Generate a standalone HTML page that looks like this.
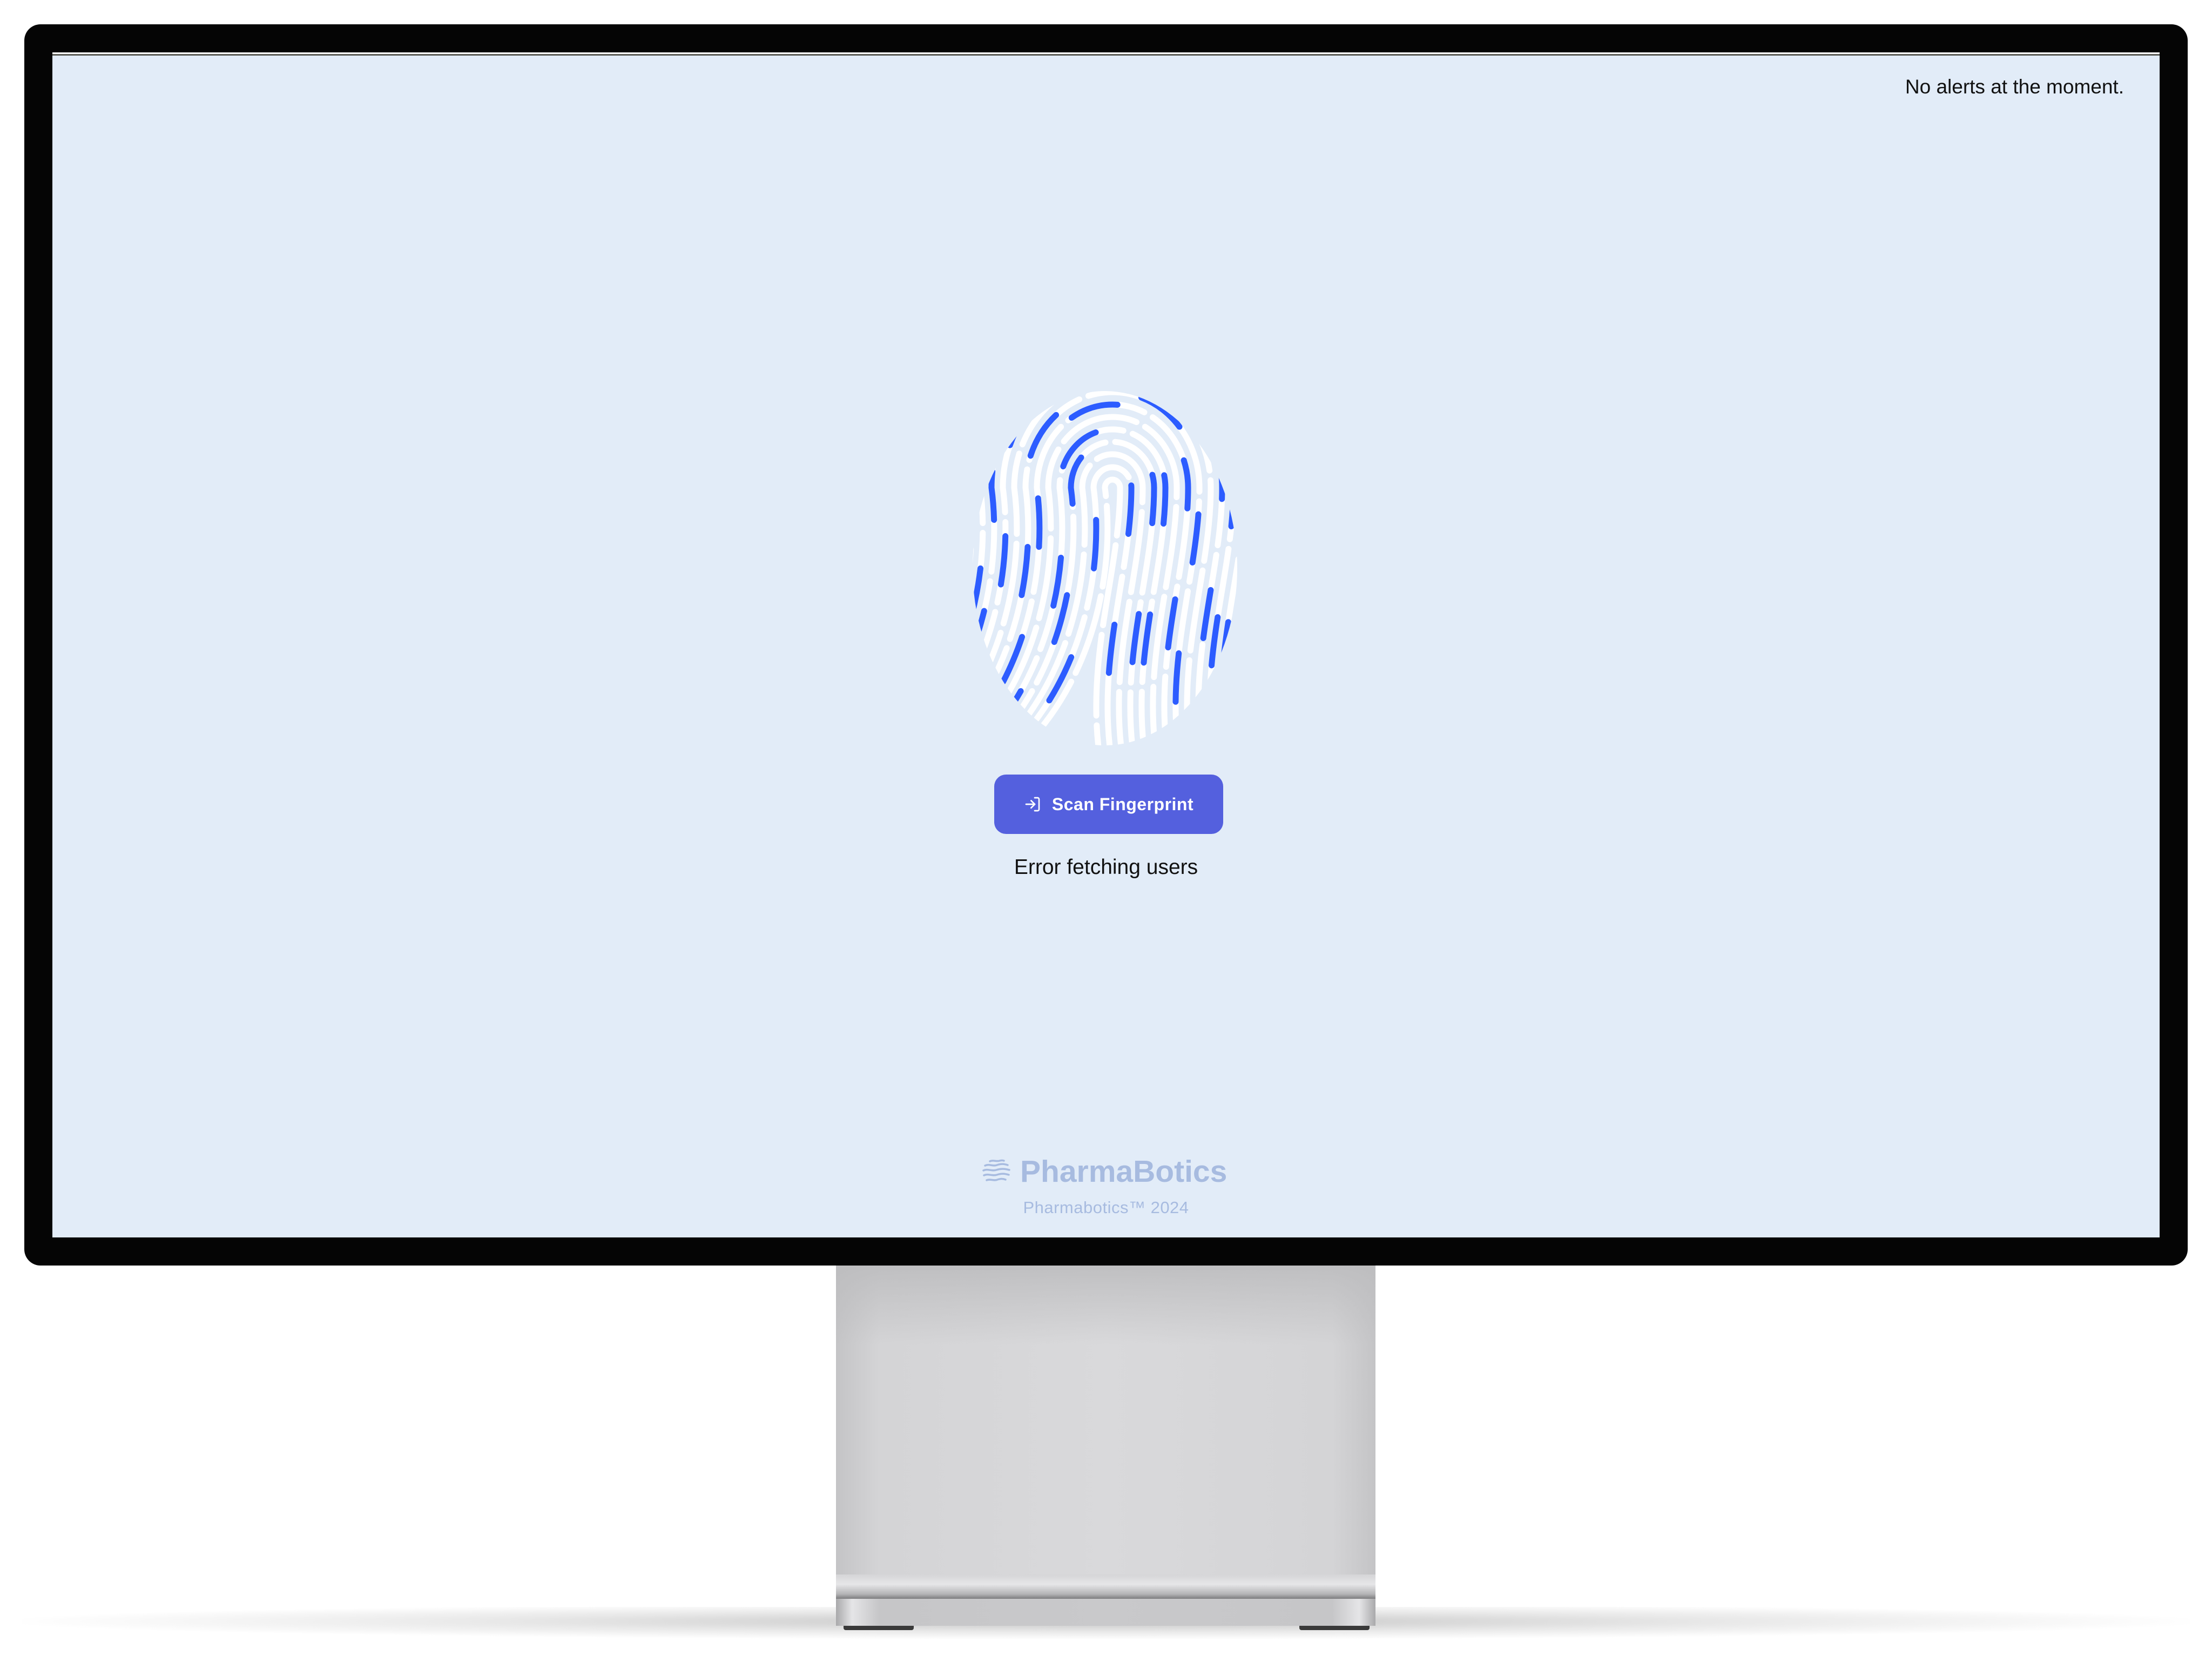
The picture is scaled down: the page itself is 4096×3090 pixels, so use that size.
<!DOCTYPE html>
<html><head><meta charset="utf-8">
<style>
html,body{margin:0;padding:0;background:#fff;}
body{width:4096px;height:3090px;position:relative;overflow:hidden;font-family:"Liberation Sans",sans-serif;}
.shadow{position:absolute;left:40px;top:2975px;width:4016px;height:60px;background:radial-gradient(ellipse at 50% 45%,rgba(150,150,150,.55) 0%,rgba(190,190,190,.35) 40%,rgba(255,255,255,0) 72%);}
.stand{position:absolute;left:1548px;top:2330px;width:999px;height:630px;background:linear-gradient(90deg,#c4c4c6 0%,#d4d4d6 8%,#d9d9db 50%,#d4d4d6 92%,#c4c4c6 100%);}
.stand:before{content:"";position:absolute;left:0;top:0;right:0;height:160px;background:linear-gradient(180deg,#bdbdbf,rgba(217,217,219,0));}
.band{position:absolute;left:1548px;top:2915px;width:999px;height:45px;background:linear-gradient(180deg,#d5d5d7 0%,#e6e6e8 40%,#b5b5b7 80%,#7d7d7f 100%);}
.foot{position:absolute;left:1548px;top:2960px;width:999px;height:50px;background:linear-gradient(90deg,#a9a9ab 0%,#e5e5e7 3%,#c6c6c8 8%,#c9c9cb 50%,#c6c6c8 92%,#e5e5e7 97%,#a9a9ab 100%);}
.feet{position:absolute;top:3010px;height:8px;background:#3a3a3a;border-radius:0 0 4px 4px;}
.bezel{position:absolute;left:45px;top:45px;width:4006px;height:2298px;background:#050505;border-radius:30px;}
.screen{position:absolute;left:97px;top:97px;width:3902px;height:2194px;background:#e2ecf8;border-top:3px solid #fff;box-sizing:border-box;}
.screen:before{content:"";position:absolute;left:0;right:0;top:0;height:3px;background:#5a5b55;}
.alert{position:absolute;right:66px;top:40px;font-size:37px;color:#111;}
.btn{position:absolute;left:1744px;top:1334px;width:424px;height:110px;border-radius:22px;background:#5460de;color:#fff;font-weight:bold;font-size:32px;display:flex;align-items:center;justify-content:center;gap:20px;letter-spacing:.5px;}
.err{position:absolute;left:0;width:100%;top:1484px;text-align:center;font-size:39px;color:#111;}
.logo{position:absolute;left:1722px;top:2036px;display:flex;align-items:center;gap:18px;color:#a7bbe0;font-weight:bold;font-size:57px;}
.copy{position:absolute;left:0;width:100%;top:2118px;text-align:center;color:#a7bbe0;font-size:31px;letter-spacing:.5px;}
</style></head><body>
<div class="shadow"></div>
<div class="stand"></div>
<div class="band"></div>
<div class="foot"></div>
<div class="feet" style="left:1562px;width:130px"></div>
<div class="feet" style="left:2406px;width:130px"></div>
<div class="bezel"></div>
<div class="screen">
<div class="alert">No alerts at the moment.</div>
<svg style="position:absolute;left:0;top:0" width="3902" height="2194" viewBox="97 97 3902 2194">
<defs><clipPath id="fp"><ellipse cx="2046" cy="1049" rx="245" ry="328"/></clipPath></defs>
<g clip-path="url(#fp)" fill="none" stroke-width="11" stroke-linecap="round">
<g stroke="#ffffff" stroke-dasharray="150 18">
<path d="M1896 1380 C2026 1250 2066 1050 2046 900 A14 15 0 0 1 2074 900 C2074 1050 2014 1200 2034 1380" stroke-dashoffset="0"/>
<path d="M1875 1380 C2005 1250 2045 1050 2025 900 A35 38 0 0 1 2095 900 C2095 1050 2035 1200 2055 1380" stroke-dashoffset="40"/>
<path d="M1854 1380 C1984 1250 2024 1050 2004 900 A56 62 0 0 1 2116 900 C2116 1050 2056 1200 2076 1380" stroke-dashoffset="90"/>
<path d="M1833 1380 C1963 1250 2003 1050 1983 900 A77 85 0 0 1 2137 900 C2137 1050 2077 1200 2097 1380" stroke-dashoffset="20"/>
<path d="M1812 1380 C1942 1250 1982 1050 1962 900 A98 108 0 0 1 2158 900 C2158 1050 2098 1200 2118 1380" stroke-dashoffset="120"/>
<path d="M1791 1380 C1921 1250 1961 1050 1941 900 A119 131 0 0 1 2179 900 C2179 1050 2119 1200 2139 1380" stroke-dashoffset="60"/>
<path d="M1770 1380 C1900 1250 1940 1050 1920 900 A140 154 0 0 1 2200 900 C2200 1050 2140 1200 2160 1380" stroke-dashoffset="10"/>
<path d="M1749 1380 C1879 1250 1919 1050 1899 900 A161 177 0 0 1 2221 900 C2221 1050 2161 1200 2181 1380" stroke-dashoffset="100"/>
<path d="M1728 1380 C1858 1250 1898 1050 1878 900 A182 200 0 0 1 2242 900 C2242 1050 2182 1200 2202 1380" stroke-dashoffset="70"/>
<path d="M1707 1380 C1837 1250 1877 1050 1857 900 A203 223 0 0 1 2263 900 C2263 1050 2203 1200 2223 1380" stroke-dashoffset="30"/>
<path d="M1686 1380 C1816 1250 1856 1050 1836 900 A224 246 0 0 1 2284 900 C2284 1050 2224 1200 2244 1380" stroke-dashoffset="140"/>
<path d="M1665 1380 C1795 1250 1835 1050 1815 900 A245 270 0 0 1 2305 900 C2305 1050 2245 1200 2265 1380" stroke-dashoffset="50"/>
<path d="M1644 1380 C1774 1250 1814 1050 1794 900 A266 293 0 0 1 2326 900 C2326 1050 2266 1200 2286 1380" stroke-dashoffset="80"/>
</g>
<g stroke="#2c5cff" stroke-dasharray="90 170">
<path d="M1875 1380 C2005 1250 2045 1050 2025 900 A35 38 0 0 1 2095 900 C2095 1050 2035 1200 2055 1380" stroke-dashoffset="150"/>
<path d="M1833 1380 C1963 1250 2003 1050 1983 900 A77 85 0 0 1 2137 900 C2137 1050 2077 1200 2097 1380" stroke-dashoffset="30"/>
<path d="M1812 1380 C1942 1250 1982 1050 1962 900 A98 108 0 0 1 2158 900 C2158 1050 2098 1200 2118 1380" stroke-dashoffset="220"/>
<path d="M1770 1380 C1900 1250 1940 1050 1920 900 A140 154 0 0 1 2200 900 C2200 1050 2140 1200 2160 1380" stroke-dashoffset="110"/>
<path d="M1749 1380 C1879 1250 1919 1050 1899 900 A161 177 0 0 1 2221 900 C2221 1050 2161 1200 2181 1380" stroke-dashoffset="200"/>
<path d="M1707 1380 C1837 1250 1877 1050 1857 900 A203 223 0 0 1 2263 900 C2263 1050 2203 1200 2223 1380" stroke-dashoffset="180"/>
<path d="M1686 1380 C1816 1250 1856 1050 1836 900 A224 246 0 0 1 2284 900 C2284 1050 2224 1200 2244 1380" stroke-dashoffset="60"/>
<path d="M1665 1380 C1795 1250 1835 1050 1815 900 A245 270 0 0 1 2305 900 C2305 1050 2245 1200 2265 1380" stroke-dashoffset="240"/>
</g>
</g>
</svg>
<div class="btn"><svg width="32" height="32" viewBox="0 0 24 24" fill="none" stroke="#fff" stroke-width="2" stroke-linecap="round" stroke-linejoin="round"><path d="M15 3h4a2 2 0 0 1 2 2v14a2 2 0 0 1-2 2h-4"/><path d="M10 17l5-5-5-5"/><path d="M15 12H3"/></svg><span>Scan Fingerprint</span></div>
<div class="err">Error fetching users</div>
<div class="logo"><svg width="52" height="50" viewBox="0 0 52 50" fill="none" stroke="#a7bbe0" stroke-width="3.5" stroke-linecap="round"><path d="M14 6c6-3 12 1 18-1 4-1 6-1 8 0"/><path d="M5 14c8-4 14 2 22-1 8-3 14-2 20 0"/><path d="M2 23c8-4 15 2 24-1 9-3 16-2 24 0"/><path d="M3 32c8-4 15 2 24-1 9-3 15-2 22 0"/><path d="M8 41c7-3 13 2 20-1 6-2 10-2 15 0"/></svg><span>PharmaBotics</span></div>
<div class="copy">Pharmabotics™ 2024</div>
</div>
</body></html>
